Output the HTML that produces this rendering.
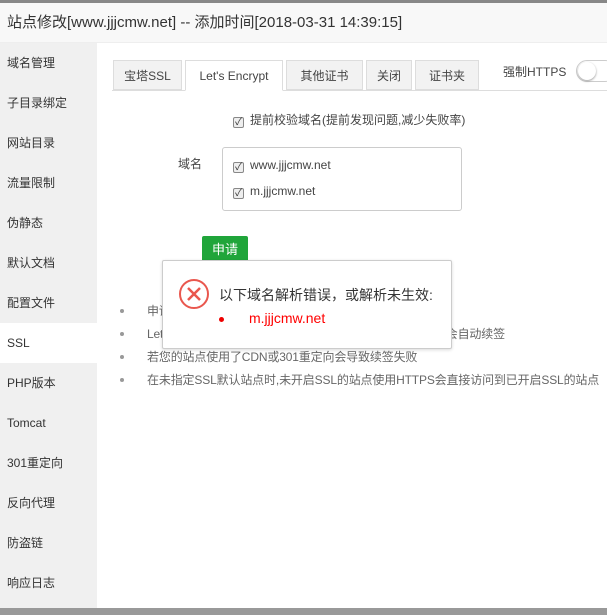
<!DOCTYPE html>
<html><head><meta charset="utf-8"><style>
*{margin:0;padding:0;box-sizing:border-box}
body{width:607px;height:615px;overflow:hidden;background:#fff;font-family:"Liberation Sans","Noto Sans CJK SC",sans-serif;font-size:12px;color:#555;position:relative}
.top{position:absolute;left:0;top:0;width:607px;height:3px;background:#888}
.title{position:absolute;left:0;top:3px;width:607px;height:40px;background:#f8f8f8;border-bottom:1px solid #eee;font-size:15px;color:#333;line-height:40px;padding-left:7px}
.side{position:absolute;left:0;top:43px;width:97px;height:565px;background:#f0f0f0}
.side div{height:40px;line-height:40px;padding-left:7px;font-size:12px;color:#333}
.side .on{background:#fff}
.bot{position:absolute;left:0;top:608px;width:607px;height:7px;background:#999}
.tabs{position:absolute;left:112px;top:90px;width:495px;border-top:1px solid #ddd}
.tab{position:absolute;top:60px;height:30px;line-height:30px;text-align:center;background:#f2f2f2;border:1px solid #ddd;color:#444;font-size:12px}
.tab.on{background:#fff;border-bottom-color:#fff;height:31px}
.abs{position:absolute}
.cb{display:inline-block;width:11px;height:11px;border:1px solid #888;border-radius:2px;background:#eee;vertical-align:-1px;margin-right:6px;position:relative;font-size:10px;line-height:9px;text-align:center;color:#333}
ul{position:absolute;left:120px;top:303px;list-style:none}
li{height:23px;line-height:16px;color:#666;position:relative;padding-left:27px;letter-spacing:-0.15px;white-space:nowrap}
li:before{content:"";position:absolute;left:0;top:6px;width:4px;height:4px;border-radius:50%;background:#999}
</style></head><body>
<div class="top"></div>
<div class="title">站点修改[www.jjjcmw.net] -- 添加时间[2018-03-31 14:39:15]</div>
<div class="side">
<div>域名管理</div><div>子目录绑定</div><div>网站目录</div><div>流量限制</div><div>伪静态</div><div>默认文档</div><div>配置文件</div><div class="on">SSL</div><div>PHP版本</div><div>Tomcat</div><div>301重定向</div><div>反向代理</div><div>防盗链</div><div>响应日志</div>
</div>
<div class="bot"></div>
<div class="tabs"></div>
<div class="tab" style="left:113px;width:69px">宝塔SSL</div>
<div class="tab on" style="left:185px;width:98px">Let's Encrypt</div>
<div class="tab" style="left:286px;width:77px">其他证书</div>
<div class="tab" style="left:366px;width:46px">关闭</div>
<div class="tab" style="left:415px;width:64px">证书夹</div>
<div class="abs" style="left:503px;top:63px;color:#444">强制HTTPS</div>
<div class="abs" style="left:576px;top:60px;width:40px;height:22px;border:1px solid #ccc;border-radius:11px;background:#fff"><div style="position:absolute;left:1px;top:1px;width:18px;height:18px;border-radius:50%;background:#fff;box-shadow:0 1px 2px #999"></div></div>
<div class="abs" style="left:233px;top:111px;color:#444"><span class="cb">✓</span>提前校验域名(提前发现问题,减少失败率)</div>
<div class="abs" style="left:178px;top:155px;color:#444">域名</div>
<div class="abs" style="left:222px;top:147px;width:240px;height:64px;border:1px solid #ccc;border-radius:3px"></div>
<div class="abs" style="left:233px;top:158px;color:#444"><span class="cb">✓</span>www.jjjcmw.net</div>
<div class="abs" style="left:233px;top:184px;color:#444"><span class="cb">✓</span>m.jjjcmw.net</div>
<div class="abs" style="left:202px;top:236px;width:46px;height:30px;background:#20a53a;border-radius:2px;color:#fff;font-size:13px;text-align:center;line-height:28px">申请</div>
<ul>
<li>申请之前，请确保域名已解析</li>
<li>Let's Encrypt免费证书，有效期3个月，支持多域名。默认会自动续签</li>
<li>若您的站点使用了CDN或301重定向会导致续签失败</li>
<li>在未指定SSL默认站点时,未开启SSL的站点使用HTTPS会直接访问到已开启SSL的站点</li>
</ul>
<div class="abs" style="left:162px;top:260px;width:290px;height:89px;background:#fff;border:1px solid #ccc;border-radius:2px;box-shadow:0 1px 3px rgba(0,0,0,.15)">
<svg class="abs" style="left:15px;top:17px" width="32" height="32" viewBox="0 0 32 32"><circle cx="16" cy="16" r="14" fill="none" stroke="#e9574e" stroke-width="2"/><path d="M10 10L22 22M22 10L10 22" stroke="#e9574e" stroke-width="2.5"/></svg>
<div class="abs" style="left:56px;top:24px;font-size:14px;color:#333">以下域名解析错误，或解析未生效:</div>
<div class="abs" style="left:56px;top:56px;width:5px;height:5px;border-radius:50%;background:#e00"></div>
<div class="abs" style="left:86px;top:49px;font-size:14px;color:#f00">m.jjjcmw.net</div>
</div>
</body></html>
